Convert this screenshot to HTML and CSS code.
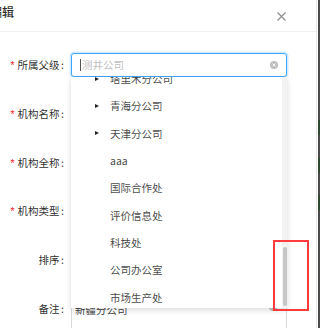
FILE: index.html
```html
<!DOCTYPE html>
<html lang="zh-CN">
<head>
    <meta charset="UTF-8">
    <meta name="viewport" content="width=device-width, initial-scale=1.0">
    <title>编辑机构</title>
    <link rel="stylesheet" href="styles.css">
</head>
<body>

<div class="page">
    <div class="modal">
        <div class="modal-header">
            <span class="modal-title">编辑</span>
            <span class="modal-close">
                <svg width="9" height="9" viewBox="0 0 9 9"><path d="M0.5 0.5L8.5 8.5M8.5 0.5L0.5 8.5" stroke="#8c8c8c" stroke-width="1.1" fill="none"/></svg>
            </span>
        </div>

        <div class="modal-body">
            <div class="form-row">
                <label class="form-label"><span class="req">*</span>所属父级<span class="colon">:</span></label>
                <div class="form-field">
                    <div class="select focused">
                        <span class="cursor"></span>
                        <span class="placeholder">测井公司</span>
                        <span class="clear">
                            <svg width="8" height="8" viewBox="0 0 8 8"><circle cx="4" cy="4" r="4" fill="#bfbfbf"/><path d="M2.6 2.6L5.4 5.4M5.4 2.6L2.6 5.4" stroke="#fff" stroke-width="0.9"/></svg>
                        </span>
                    </div>

                    <div class="dropdown">
                        <ul class="tree">
                            <li><span class="switcher"><i class="caret"></i></span>塔里木分公司</li>
                            <li><span class="switcher"><i class="caret"></i></span>青海分公司</li>
                            <li><span class="switcher"><i class="caret"></i></span>天津分公司</li>
                            <li><span class="switcher"></span>aaa</li>
                            <li><span class="switcher"></span>国际合作处</li>
                            <li><span class="switcher"></span>评价信息处</li>
                            <li><span class="switcher"></span>科技处</li>
                            <li><span class="switcher"></span>公司办公室</li>
                            <li><span class="switcher"></span>市场生产处</li>
                            <li><span class="switcher"></span>新疆分公司</li>
                        </ul>
                        <div class="scroll-track"><div class="scroll-thumb"></div></div>
                    </div>
                </div>
            </div>

            <div class="form-row">
                <label class="form-label"><span class="req">*</span>机构名称<span class="colon">:</span></label>
                <div class="form-field"><div class="input"></div></div>
            </div>

            <div class="form-row">
                <label class="form-label"><span class="req">*</span>机构全称<span class="colon">:</span></label>
                <div class="form-field"><div class="input"></div></div>
            </div>

            <div class="form-row">
                <label class="form-label"><span class="req">*</span>机构类型<span class="colon">:</span></label>
                <div class="form-field"><div class="input"></div></div>
            </div>

            <div class="form-row">
                <label class="form-label">排序<span class="colon">:</span></label>
                <div class="form-field"><div class="input"></div></div>
            </div>

            <div class="form-row">
                <label class="form-label">备注<span class="colon">:</span></label>
                <div class="form-field">
                    <div class="textarea">
                        新疆分公司
                        <span class="clear">
                            <svg width="8" height="8" viewBox="0 0 8 8"><circle cx="4" cy="4" r="4" fill="#bfbfbf"/><path d="M2.6 2.6L5.4 5.4M5.4 2.6L2.6 5.4" stroke="#fff" stroke-width="0.9"/></svg>
                        </span>
                    </div>
                </div>
            </div>
        </div>
    </div>
    <div class="mask"></div>
</div>

<div class="annotation"></div>

</body>
</html>
```

FILE: styles.css
```css
html, body {
    margin: 0;
    padding: 0;
    height: 328px;
    overflow: hidden;
    background: #fff;
    font-family: "Noto Sans CJK SC", "Noto Sans", sans-serif;
    font-size: 10.5px;
    color: rgba(0, 0, 0, 0.85);
}
.page {
    display: flex;
    height: 328px;
}
.modal {
    flex: 0 0 316px;
    border-right: 1px solid #e6e6e6;
    background: #fff;
}
.mask {
    width: 2px;
    margin-left: 1px;
    background:
        linear-gradient(to bottom,
            transparent 120px, #2f4a30 120px, #2f4a30 135px, transparent 135px,
            transparent 158px, #2f4a30 158px, #2f4a30 173px, transparent 173px,
            transparent 195px, #2f4a30 195px, #2f4a30 210px, transparent 210px),
        #4a4a4a;
}

/* header */
.modal-header {
    display: flex;
    justify-content: space-between;
    align-items: flex-start;
    height: 31px;
    border-bottom: 1px solid #efefef;
}
.modal-title {
    margin-left: -10px;
    padding-top: 4px;
    font-size: 12px;
    line-height: 16px;
    font-weight: 500;
}
.modal-close {
    display: flex;
    margin-top: 11.5px;
    margin-right: 30px;
}

/* form */
.modal-body {
    padding-top: 21px;
}
.form-row {
    display: flex;
    margin-bottom: 24.8px;
}
.form-label {
    flex: 0 0 71px;
    text-align: right;
    line-height: 24px;
    white-space: nowrap;
}
.req {
    color: #f5222d;
    margin-right: 3px;
    font-family: "Liberation Sans", sans-serif;
}
.colon {
    margin: 0 7px 0 1.5px;
}
.form-field {
    position: relative;
    width: 216px;
}
.input, .select {
    box-sizing: border-box;
    height: 24px;
    border: 1px solid #d9d9d9;
    border-radius: 3px;
    background: #fff;
}
.select {
    display: flex;
    align-items: center;
    padding-left: 8px;
}
.select.focused {
    border-color: #40a9ff;
    box-shadow: 0 0 0 1.5px rgba(24, 144, 255, 0.2);
}
.cursor {
    width: 1px;
    height: 12px;
    background: #555;
    margin-right: 1px;
}
.placeholder {
    color: #bfbfbf;
    line-height: 22px;
}
.clear {
    display: flex;
    margin-left: auto;
    margin-right: 8px;
}
.textarea {
    box-sizing: border-box;
    display: flex;
    min-height: 45px;
    padding: 4px 3px;
    line-height: 15px;
    border: 1px solid #d9d9d9;
    border-radius: 3px;
    color: rgba(0, 0, 0, 0.8);
}
.textarea .clear {
    margin-top: 1px;
    margin-right: 6px;
}

/* tree dropdown */
.dropdown {
    position: absolute;
    top: 24px;
    left: 0;
    width: 216px;
    height: 231px;
    display: flex;
    background: #fff;
    box-shadow: 0 1.5px 6px rgba(0, 0, 0, 0.15);
    z-index: 10;
    overflow: hidden;
}
.tree {
    flex: 1;
    list-style: none;
    margin: -12px 0 0 0;
    padding: 0;
}
.tree li {
    display: flex;
    align-items: center;
    height: 27.3px;
    padding-left: 24px;
    white-space: nowrap;
    color: rgba(0, 0, 0, 0.75);
}
.switcher {
    flex: 0 0 15px;
    display: flex;
    align-items: center;
}
.caret {
    width: 0;
    height: 0;
    border-left: 4px solid #222;
    border-top: 2.5px solid transparent;
    border-bottom: 2.5px solid transparent;
}
.scroll-track {
    position: relative;
    flex: 0 0 5px;
    background: #f3f3f3;
}
.scroll-thumb {
    position: absolute;
    left: 0.5px;
    right: 0.5px;
    top: 170px;
    height: 59px;
    border-radius: 2px;
    background: #c6c6c6;
}

/* red highlight box drawn over the screenshot */
.annotation {
    position: absolute;
    left: 273px;
    top: 240px;
    width: 36px;
    height: 71px;
    box-sizing: border-box;
    border: 2px solid #ff3b3b;
    z-index: 20;
}
```
